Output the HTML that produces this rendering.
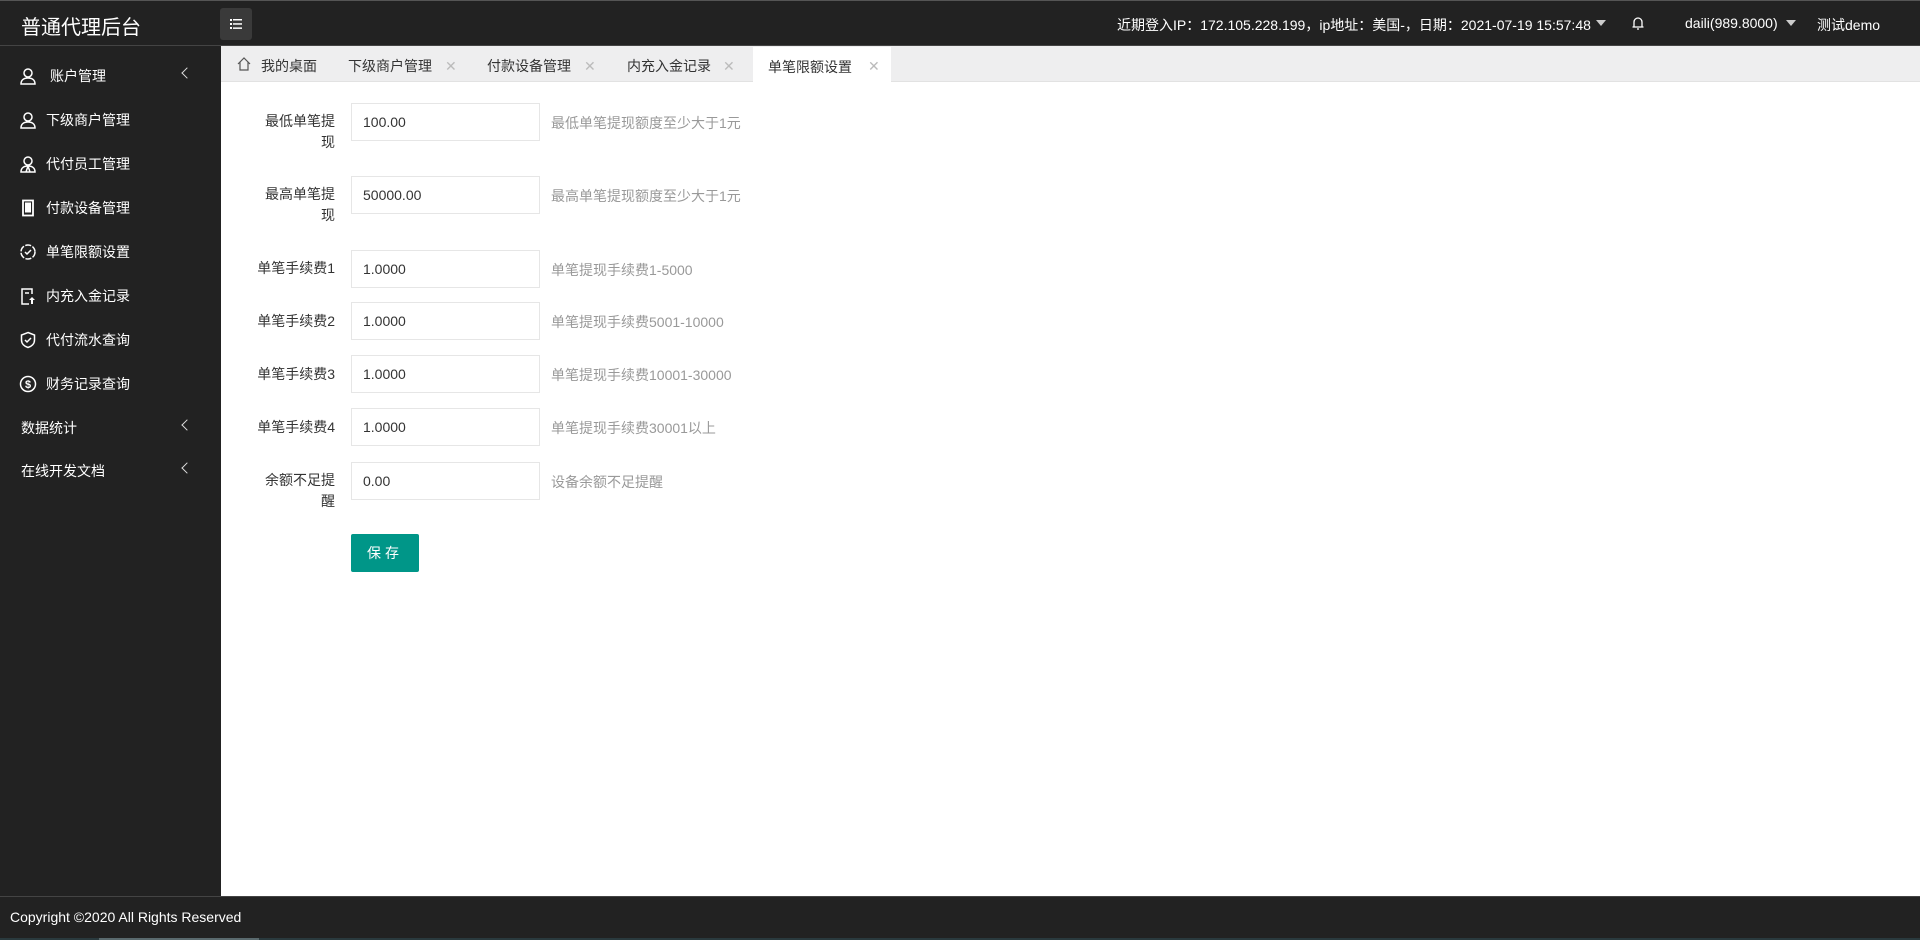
<!DOCTYPE html>
<html><head><meta charset="utf-8"><style>
*{margin:0;padding:0;box-sizing:border-box}
body{width:1920px;height:940px;overflow:hidden;background:#fff;font-family:"Liberation Sans","Noto Sans CJK SC",sans-serif;font-size:14px;color:#333;position:relative}
.hd{position:absolute;left:0;top:0;width:1920px;height:46px;background:#222;border-top:1px solid #555;border-bottom:1px solid #444}
.logo{position:absolute;left:21px;top:10px;color:#fff;font-size:20px}
.ham{position:absolute;left:220px;top:7px;width:32px;height:32px;background:#3a3a3a;border-radius:3px}
.hr{position:absolute;top:14px;color:#fff;font-size:14px;white-space:nowrap}
.tri{position:absolute;top:19px;width:0;height:0;border-left:5px solid transparent;border-right:5px solid transparent;border-top:6px solid #ccc}
.sb{position:absolute;left:0;top:46px;width:221px;height:850px;background:#222}
.it{position:absolute;left:0;width:221px;color:#fff;font-size:14px;line-height:20px}
.it svg{position:absolute;left:19px;top:1px}
.it span{position:absolute;left:46px;white-space:nowrap}
.arr{position:absolute;left:183px;top:3px;width:8px;height:8px;border-left:1.5px solid #ddd;border-bottom:1.5px solid #ddd;transform:rotate(45deg)}
.tabs{position:absolute;left:221px;top:46px;width:1699px;height:36px;background:#eeeeef;border-bottom:1px solid #e2e2e2}
.tab{position:absolute;top:10px;font-size:14px;color:#333;white-space:nowrap}
.x{position:absolute;top:12px;color:#bbb;font-size:14px}
.act{position:absolute;left:753px;top:47px;width:138px;height:36px;background:#fff}
.lb{position:absolute;left:259px;text-align:right;font-size:14px;color:#333;line-height:21px;width:76px}
.lb.n{left:235px;width:100px;white-space:nowrap}
.in{position:absolute;left:351px;width:189px;height:38px;border:1px solid #e6e6e6;padding-left:11px;line-height:36px;font-size:14px;color:#333}
.hint{position:absolute;left:551px;font-size:14px;color:#999;white-space:nowrap}
.btn{position:absolute;left:351px;top:534px;width:68px;height:38px;background:#009688;color:#fff;text-align:center;line-height:38px;font-size:14px;letter-spacing:4px;border-radius:2px}
.ft{position:absolute;left:0;top:896px;width:1920px;height:44px;background:#222;border-top:1px solid #444;color:#fff;font-size:14px}
</style></head><body>
<div class="hd">
<div class="logo">普通代理后台</div>
<div class="ham"><svg width="32" height="32"><g fill="#fff"><rect x="10" y="11" width="2" height="2"/><rect x="13" y="11" width="9" height="1.5"/><rect x="10" y="15" width="2" height="2"/><rect x="13" y="15.2" width="9" height="1.5"/><rect x="10" y="19" width="2" height="2"/><rect x="13" y="19.4" width="9" height="1.5"/></g></svg></div>
<div class="hr" style="left:1117px">近期登入IP：172.105.228.199，ip地址：美国-，日期：2021-07-19 15:57:48</div>
<div class="tri" style="left:1596px"></div>
<svg style="position:absolute;left:1631px;top:14px" width="14" height="16"><path d="M3 12V7a4 4 0 0 1 8 0v5h1.5M1.5 12H12.5M6 14h2" stroke="#fff" stroke-width="1.3" fill="none"/></svg>
<div class="hr" style="left:1685px">daili(989.8000)</div>
<div class="tri" style="left:1786px"></div>
<div class="hr" style="left:1817px">测试demo</div>
</div>
<div class="sb">
<div class="it" style="top:20px"><svg width="18" height="18"><circle cx="9" cy="6" r="4" stroke="#fff" stroke-width="1.5" fill="none"/><path d="M2 17c0-4 3-6 7-6s7 2 7 6z" stroke="#fff" stroke-width="1.5" fill="none"/></svg><span style="left:50px">账户管理</span><i class="arr"></i></div>
<div class="it" style="top:64px"><svg width="18" height="18"><circle cx="9" cy="6" r="4" stroke="#fff" stroke-width="1.5" fill="none"/><path d="M2 17c0-4 3-6 7-6s7 2 7 6z" stroke="#fff" stroke-width="1.5" fill="none"/></svg><span>下级商户管理</span></div>
<div class="it" style="top:108px"><svg width="18" height="18"><circle cx="9" cy="6" r="4" stroke="#fff" stroke-width="1.5" fill="none"/><path d="M2 17c0-4 3-6 7-6s7 2 7 6zM9 11l-2 6M9 11l2 6" stroke="#fff" stroke-width="1.5" fill="none"/></svg><span>代付员工管理</span></div>
<div class="it" style="top:152px"><svg width="18" height="18"><rect x="4" y="1.5" width="10" height="15" stroke="#fff" stroke-width="1.8" fill="none"/><rect x="6" y="3.5" width="6" height="10" fill="#fff"/></svg><span>付款设备管理</span></div>
<div class="it" style="top:196px"><svg width="18" height="18"><circle cx="9" cy="9" r="7" stroke="#fff" stroke-width="1.5" fill="none" stroke-dasharray="6 1.5"/><path d="M6 9l2 2 4-4" stroke="#fff" stroke-width="1.5" fill="none"/></svg><span>单笔限额设置</span></div>
<div class="it" style="top:240px"><svg width="18" height="18"><path d="M13 7V2H3v15h7M6 6h4" stroke="#fff" stroke-width="1.5" fill="none"/><path d="M13 10l-3 3h2v4h2v-4h2z" fill="#fff"/></svg><span>内充入金记录</span></div>
<div class="it" style="top:284px"><svg width="18" height="18"><path d="M9 1.5l6.5 2.5v5c0 4-3 6.5-6.5 7.5C5.5 15.5 2.5 13 2.5 9V4z" stroke="#fff" stroke-width="1.5" fill="none"/><path d="M6 9l2 2 4-4" stroke="#fff" stroke-width="1.5" fill="none"/></svg><span>代付流水查询</span></div>
<div class="it" style="top:328px"><svg width="18" height="18"><circle cx="9" cy="9" r="7.5" stroke="#fff" stroke-width="1.5" fill="none"/><text x="9" y="13" text-anchor="middle" fill="#fff" font-size="11" font-weight="bold" font-family="Liberation Sans">$</text></svg><span>财务记录查询</span></div>
<div class="it" style="top:372px"><span style="left:21px">数据统计</span><i class="arr"></i></div>
<div class="it" style="top:415px"><span style="left:21px">在线开发文档</span><i class="arr"></i></div>
</div>
<div class="tabs">
<svg style="position:absolute;left:15px;top:10px" width="16" height="16"><path d="M2 8L8 2l6 6M4 6v8h8V6" stroke="#555" stroke-width="1.2" fill="none"/></svg>
<div class="tab" style="left:40px">我的桌面</div>
<div class="tab" style="left:127px">下级商户管理</div><div class="x" style="left:224px">✕</div>
<div class="tab" style="left:266px">付款设备管理</div><div class="x" style="left:363px">✕</div>
<div class="tab" style="left:406px">内充入金记录</div><div class="x" style="left:502px">✕</div>
</div>
<div class="act"><div class="tab" style="left:15px;top:10px">单笔限额设置</div><div class="x" style="left:115px;top:11px">✕</div></div>

<div class="lb" style="top:111px">最低单笔提现</div><div class="in" style="top:103px">100.00</div><div class="hint" style="top:113px">最低单笔提现额度至少大于1元</div>
<div class="lb" style="top:184px">最高单笔提现</div><div class="in" style="top:176px">50000.00</div><div class="hint" style="top:186px">最高单笔提现额度至少大于1元</div>
<div class="lb n" style="top:258px">单笔手续费1</div><div class="in" style="top:250px">1.0000</div><div class="hint" style="top:260px">单笔提现手续费1-5000</div>
<div class="lb n" style="top:311px">单笔手续费2</div><div class="in" style="top:302px">1.0000</div><div class="hint" style="top:312px">单笔提现手续费5001-10000</div>
<div class="lb n" style="top:364px">单笔手续费3</div><div class="in" style="top:355px">1.0000</div><div class="hint" style="top:365px">单笔提现手续费10001-30000</div>
<div class="lb n" style="top:417px">单笔手续费4</div><div class="in" style="top:408px">1.0000</div><div class="hint" style="top:418px">单笔提现手续费30001以上</div>
<div class="lb" style="top:470px">余额不足提醒</div><div class="in" style="top:462px">0.00</div><div class="hint" style="top:472px">设备余额不足提醒</div>
<div class="btn">保存</div>

<div class="ft"><div style="position:absolute;left:10px;top:12px">Copyright ©2020 All Rights Reserved</div></div>
<div style="position:absolute;left:0;top:938px;width:1920px;height:2px;background:#2a3a3e"></div>
<div style="position:absolute;left:99px;top:938px;width:160px;height:2px;background:#5a6a6e"></div>
</body></html>
